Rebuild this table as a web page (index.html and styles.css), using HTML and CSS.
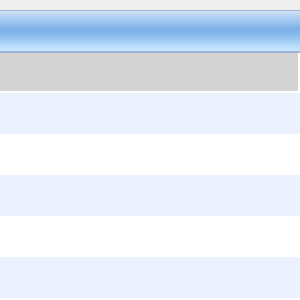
FILE: index.html
```html
<!DOCTYPE html>
<html>
<head>
<meta charset="utf-8">
<link rel="stylesheet" href="styles.css">
</head>
<body>
<div class="page">
  <div class="topbar"></div>
  <div class="header"></div>
  <div class="toolbar"></div>
  <div class="rows">
    <div class="row odd"></div>
    <div class="row"></div>
    <div class="row odd"></div>
    <div class="row"></div>
    <div class="row odd"></div>
  </div>
</div>
</body>
</html>
```
FILE: styles.css
```css
html, body {
  margin: 0;
  padding: 0;
  background: #ffffff;
  font-family: "Liberation Sans", Arial, sans-serif;
}
.page {
  width: 300px;
  height: 300px;
  overflow: hidden;
  display: flex;
  flex-direction: column;
}
.topbar {
  height: 10px;
  background: #eeeeee;
}
.header {
  height: 40px;
  border-top: 1px solid #a3b3da;
  border-bottom: 2px solid #9db3dc;
  background: linear-gradient(to bottom, #d2e2f6 0%, #b3d1f2 15%, #93c0ee 32%, #7cb0e7 45%, #86b8eb 58%, #a2cdf4 75%, #bde0fb 90%, #c6e6fd 100%);
}
.toolbar {
  height: 38px;
  width: 298px;
  background: #d3d3d3;
  margin-bottom: 2px;
}
.rows {
  display: flex;
  flex-direction: column;
  width: 300px;
}
.row {
  height: 41px;
  background: #ffffff;
}
.row.odd {
  background: #ecf2fd;
}
```
